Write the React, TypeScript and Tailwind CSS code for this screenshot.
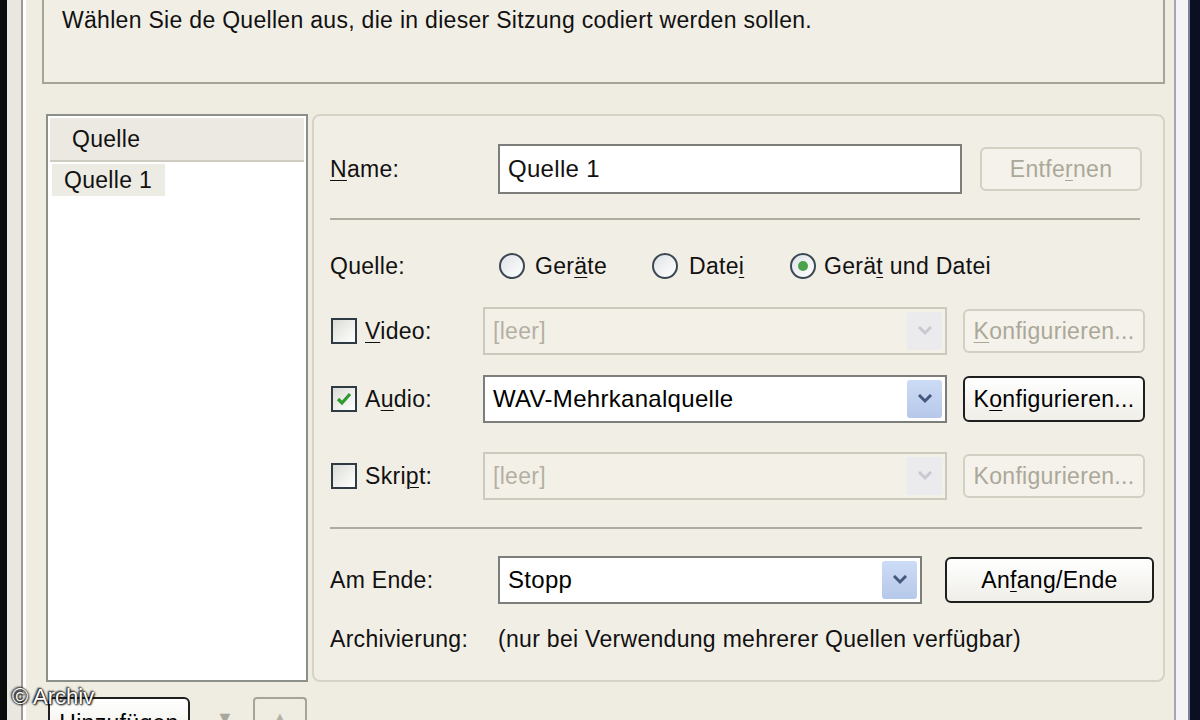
import React from "react";

const U = ({ children }: { children: React.ReactNode }) => (
  <span className="underline decoration-1 underline-offset-[3px]">{children}</span>
);

const Chevron = ({ color }: { color: string }) => (
  <svg width="14" height="10" viewBox="0 0 14 10">
    <path d="M2 2 L7 7 L12 2" fill="none" stroke={color} strokeWidth="3" strokeLinecap="square" />
  </svg>
);

const Combo = ({
  text,
  disabled,
  width,
}: {
  text: string;
  disabled?: boolean;
  width: string;
}) => (
  <div
    className={
      "shrink-0 h-[48px] flex items-center border-2 pl-[8px] pr-[3px] " +
      width +
      (disabled ? " border-[#cdcabd] bg-[#f3f0e8]" : " border-[#7d7d79] bg-white")
    }
  >
    <span className={"flex-1 " + (disabled ? "text-[#b3b0a3] text-[23px]" : "text-black text-[24px]")}>
      {text}
    </span>
    <div
      className={
        "w-[35px] h-[38px] rounded-[3px] flex items-center justify-center " +
        (disabled ? "bg-[#ebebee]" : "bg-gradient-to-b from-[#cddcf5] to-[#b6c8ea]")
      }
    >
      <Chevron color={disabled ? "#c9c8d2" : "#44577f"} />
    </div>
  </div>
);

const Btn = ({
  children,
  disabled,
  width,
  height,
}: {
  children: React.ReactNode;
  disabled?: boolean;
  width: string;
  height: string;
}) => (
  <div
    className={
      "shrink-0 flex items-center justify-center rounded-[6px] border-2 " +
      width +
      " " +
      height +
      (disabled
        ? " border-[#d2cfc3] text-[#aba899] bg-[#f4f2ea]"
        : " border-[#1f1f1f] text-black bg-gradient-to-b from-white to-[#efeee8]")
    }
  >
    {children}
  </div>
);

const Check = ({ checked }: { checked?: boolean }) => (
  <div className="shrink-0 w-[26px] h-[26px] border-2 border-[#2e3a44] bg-gradient-to-br from-[#dcdcd6] to-white flex items-center justify-center">
    {checked && (
      <svg width="18" height="16" viewBox="0 0 18 16">
        <path d="M3 8 L7 12 L15 3" fill="none" stroke="#2f9a2f" strokeWidth="3.2" />
      </svg>
    )}
  </div>
);

const Radio = ({ checked }: { checked?: boolean }) => (
  <div className="shrink-0 w-[26px] h-[26px] rounded-full border-2 border-[#3b4854] bg-gradient-to-br from-[#dfe3e6] to-white flex items-center justify-center">
    {checked && <div className="w-[10px] h-[10px] rounded-full bg-[#4aa24a]" />}
  </div>
);

export default function App() {
  return (
    <div
      className="w-[1200px] h-[720px] overflow-hidden flex bg-[#efece2] relative text-[23px] tracking-[0.3px] text-[#111]"
      style={{ fontFamily: '"Liberation Sans", Arial, sans-serif' }}
    >
      <div className="shrink-0 w-[7px] bg-[#0b0b0b]" />
      <div className="shrink-0 w-[14px] bg-[#e9e7df]" />
      <div className="shrink-0 w-[2px] bg-[#9c9a92]" />
      <div className="shrink-0 w-[3px] bg-white" />

      <div className="shrink-0 w-[1148px] flex flex-col">
        {/* top description box */}
        <div className="shrink-0 ml-[16px] mr-[9px] h-[84px] border-l-2 border-r-2 border-b-2 border-[#a6a499] bg-[#f1eee5] pl-[18px] pt-[6px] leading-[28px]">
          Wählen Sie de Quellen aus, die in dieser Sitzung codiert werden sollen.
        </div>

        <div className="shrink-0 flex mt-[30px] ml-[20px]">
          {/* list box */}
          <div className="shrink-0 w-[262px] h-[568px] border-2 border-[#8c908b] bg-white p-[2px]">
            <div className="h-[44px] bg-[#ebe9e1] border-b-2 border-[#cfcdc2] pl-[22px] flex items-center">
              Quelle
            </div>
            <div className="mt-[2px] ml-[2px] w-[113px] h-[32px] bg-[#ecebe4] pl-[12px] flex items-center">
              Quelle 1
            </div>
          </div>

          {/* group box */}
          <div className="shrink-0 ml-[4px] w-[853px] h-[568px] border-2 border-[#d6d3c6] rounded-[8px] bg-[#f1eee5] pl-[16px] flex flex-col">
            {/* Name row */}
            <div className="shrink-0 mt-[28px] h-[50px] flex items-center">
              <div className="w-[168px] shrink-0">
                <U>N</U>ame:
              </div>
              <div className="shrink-0 w-[464px] h-[50px] border-2 border-[#7d7d79] bg-white pl-[8px] flex items-center text-[24px]">
                Quelle 1
              </div>
              <div className="ml-[18px]">
                <Btn disabled width="w-[162px]" height="h-[44px]">
                  Entfe<U>r</U>nen
                </Btn>
              </div>
            </div>

            <div className="shrink-0 mt-[24px] w-[810px] h-[2px] bg-[#aeac9f]" />

            {/* Quelle radios */}
            <div className="shrink-0 mt-[24px] h-[44px] flex items-center">
              <div className="w-[169px] shrink-0">Quelle:</div>
              <div className="w-[153px] shrink-0 flex items-center gap-[10px]">
                <Radio />
                <span>
                  Ger<U>ä</U>te
                </span>
              </div>
              <div className="w-[138px] shrink-0 flex items-center gap-[11px]">
                <Radio />
                <span>
                  Date<U>i</U>
                </span>
              </div>
              <div className="flex items-center gap-[8px]">
                <Radio checked />
                <span>
                  Gerä<U>t</U> und Datei
                </span>
              </div>
            </div>

            {/* Video */}
            <div className="shrink-0 mt-[19px] h-[48px] flex items-center">
              <div className="w-[153px] shrink-0 flex items-center gap-[8px] pl-[1px]">
                <Check />
                <span>
                  <U>V</U>ideo:
                </span>
              </div>
              <Combo text="[leer]" disabled width="w-[464px]" />
              <div className="ml-[16px]">
                <Btn disabled width="w-[182px]" height="h-[44px]">
                  <U>K</U>onfigurieren...
                </Btn>
              </div>
            </div>

            {/* Audio */}
            <div className="shrink-0 mt-[20px] h-[48px] flex items-center">
              <div className="w-[153px] shrink-0 flex items-center gap-[8px] pl-[1px]">
                <Check checked />
                <span>
                  A<U>u</U>dio:
                </span>
              </div>
              <Combo text="WAV-Mehrkanalquelle" width="w-[464px]" />
              <div className="ml-[16px]">
                <Btn width="w-[182px]" height="h-[46px]">
                  K<U>o</U>nfigurieren...
                </Btn>
              </div>
            </div>

            {/* Skript */}
            <div className="shrink-0 mt-[29px] h-[48px] flex items-center">
              <div className="w-[153px] shrink-0 flex items-center gap-[8px] pl-[1px]">
                <Check />
                <span>
                  Skri<U>p</U>t:
                </span>
              </div>
              <Combo text="[leer]" disabled width="w-[464px]" />
              <div className="ml-[16px]">
                <Btn disabled width="w-[182px]" height="h-[44px]">
                  Konfigurieren...
                </Btn>
              </div>
            </div>

            <div className="shrink-0 mt-[27px] w-[812px] h-[2px] bg-[#aeac9f]" />

            {/* Am Ende */}
            <div className="shrink-0 mt-[27px] h-[48px] flex items-center">
              <div className="w-[168px] shrink-0">Am Ende:</div>
              <Combo text="Stopp" width="w-[424px]" />
              <div className="ml-[23px]">
                <Btn width="w-[209px]" height="h-[46px]">
                  An<U>f</U>ang/Ende
                </Btn>
              </div>
            </div>

            {/* Archivierung */}
            <div className="shrink-0 mt-[20px] h-[30px] flex items-center">
              <div className="w-[168px] shrink-0">Archivierung:</div>
              <div>(nur bei Verwendung mehrerer Quellen verfügbar)</div>
            </div>
          </div>
        </div>

        {/* bottom buttons (cut off) */}
        <div className="shrink-0 mt-[15px] ml-[22px] flex items-start">
          <Btn width="w-[142px]" height="h-[44px]">
            <span className="mt-[8px]">
              Hin<U>z</U>ufügen
            </span>
          </Btn>
          <div className="shrink-0 ml-[15px] w-[40px] h-[40px] flex items-start justify-center pt-[8px] text-[#a9a79c] text-[18px]">
            ▼
          </div>
          <div className="shrink-0 ml-[8px] w-[54px] h-[40px] border-l-2 border-r-2 border-t-2 border-[#a6a498] rounded-t-[4px] flex items-start justify-center pt-[6px] text-[#b4b2a7] text-[18px]">
            ▲
          </div>
        </div>
      </div>

      <div className="shrink-0 w-[2px] bg-[#a4a6b6]" />
      <div className="shrink-0 w-[12px] bg-[#f4f4f6]" />
      <div className="shrink-0 w-[2px] bg-[#7a7f9a]" />
      <div className="flex-1 bg-[#0c0e22]" />

      {/* watermark */}
      <div className="absolute left-[12px] top-[680px] text-white text-[22px] tracking-normal [text-shadow:0_0_2px_#000,1px_1px_2px_#000,-1px_-1px_2px_#000]">
        © Archiv
      </div>
    </div>
  );
}
